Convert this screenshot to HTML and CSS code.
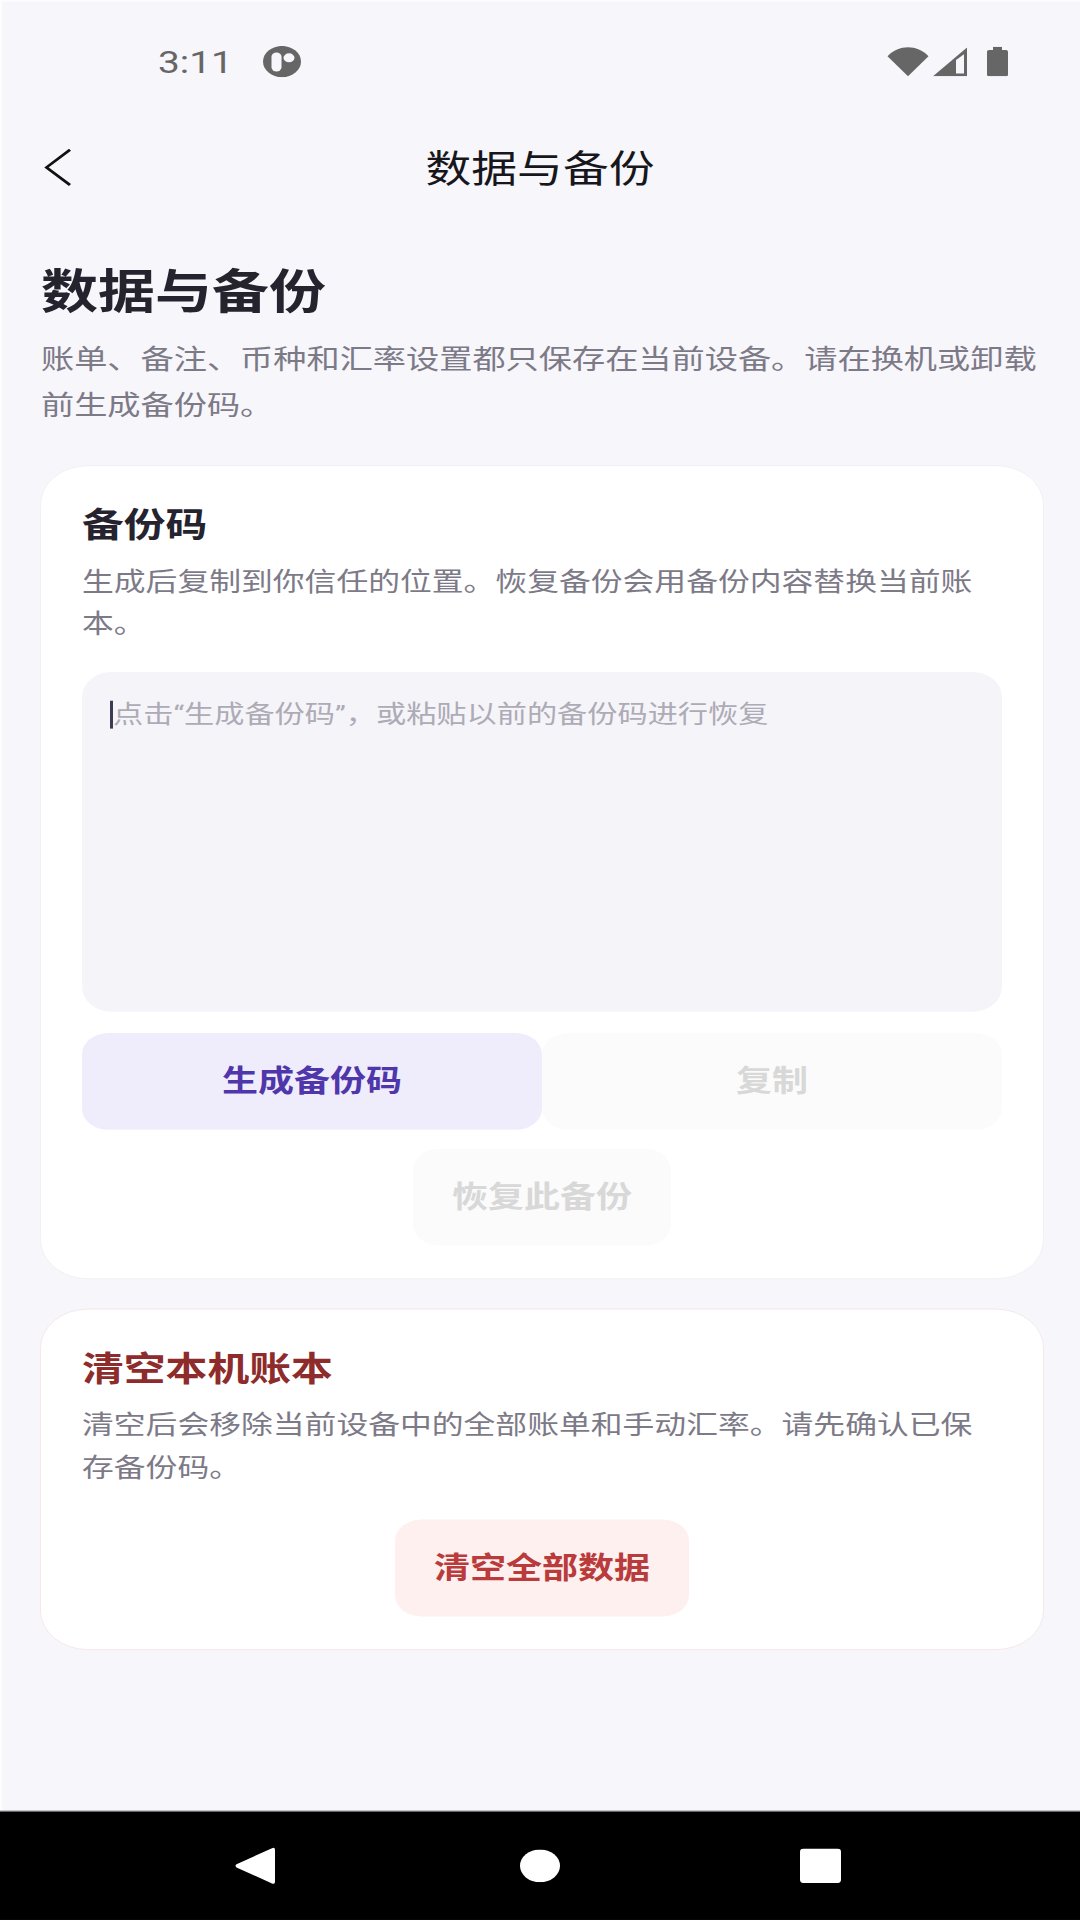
FILE: index.html
```html
<!DOCTYPE html>
<html lang="zh-CN">
<head>
<meta charset="utf-8">
<title>数据与备份</title>
<link rel="stylesheet" href="styles.css">
</head>
<body>
<div class="frame">
<div class="screen">
  <div class="status-bar">
    <span class="clock">3:11</span>
    <svg class="app-dot" viewBox="0 0 38 38"><circle cx="19" cy="19" r="19" fill="#666"/><rect x="8.500" y="8" width="10" height="23" rx="5" fill="#f7f6fb"/><circle cx="26" cy="14.500" r="5.500" fill="#f7f6fb"/></svg>
    <span class="status-icons">
      <svg class="ico-wifi" viewBox="0 0 42 36"><path d="M0.500 11.500C12 -3 30 -3 41.500 11.500L21 36Z" fill="#666"/></svg>
      <svg class="ico-signal" viewBox="0 0 34 35"><path d="M34 0V35H0Z" fill="#666"/><path d="M23 15L31 8V31.500H23Z" fill="#f7f6fb"/></svg>
      <svg class="ico-battery" viewBox="0 0 21 36"><path d="M6 0H15V4H19A2 2 0 0 1 21 6V34A2 2 0 0 1 19 36H2A2 2 0 0 1 0 34V6A2 2 0 0 1 2 4H6Z" fill="#666"/></svg>
    </span>
  </div>
  <header class="top-bar">
    <svg class="back" viewBox="0 0 28 46"><path d="M26 1.500L2.500 23L26 44.500" fill="none" stroke="#111" stroke-width="3"/></svg>
    <span class="top-title">数据与备份</span>
  </header>
  <main class="content">
    <h1 class="heading">数据与备份</h1>
    <p class="intro">账单、备注、币种和汇率设置都只保存在当前设备。请在换机或卸载前生成备份码。</p>
    <section class="card card-backup">
      <h2 class="card-title">备份码</h2>
      <p class="card-desc">生成后复制到你信任的位置。恢复备份会用备份内容替换当前账本。</p>
      <div class="code-box"><span class="caret"></span><span class="placeholder">点击“生成备份码”，或粘贴以前的备份码进行恢复</span></div>
      <div class="btn-row">
        <button class="btn btn-primary">生成备份码</button>
        <button class="btn btn-disabled">复制</button>
      </div>
      <div class="btn-center">
        <button class="btn btn-disabled btn-fit">恢复此备份</button>
      </div>
    </section>
    <section class="card card-danger">
      <h2 class="card-title title-danger">清空本机账本</h2>
      <p class="card-desc">清空后会移除当前设备中的全部账单和手动汇率。请先确认已保存备份码。</p>
      <div class="btn-center btn-center-danger">
        <button class="btn btn-danger btn-fit">清空全部数据</button>
      </div>
    </section>
  </main>
  <nav class="nav-bar">
    <svg class="nav-back" viewBox="0 0 40 46"><path d="M37 1.500Q40 0 40 3.500V42.500Q40 46 37 44.500L1.500 25Q-0.500 23 1.500 21Z" fill="#fff"/></svg>
    <svg class="nav-home" viewBox="0 0 40 40"><circle cx="20" cy="20" r="20" fill="#fff"/></svg>
    <svg class="nav-recent" viewBox="0 0 41 42"><rect width="41" height="42" rx="4" fill="#fff"/></svg>
  </nav>
</div>
</div>
</body>
</html>
```
FILE: styles.css
```css
html, body {
  margin: 0;
  height: 1920px;
  overflow: hidden;
  background: #f7f6fb;
}
* { box-sizing: border-box; }
.frame { height: 1920px; overflow: hidden; }
.screen {
  width: 1080px;
  height: 2340px;
  transform: scaleY(0.8205);
  transform-origin: 0 0;
  display: flex;
  flex-direction: column;
  background: #f7f6fb;
  box-shadow: inset 2px 2px 0 #fdfdfe;
  font-family: Roboto, "Noto Sans CJK SC", sans-serif;
}
.status-bar {
  height: 150px;
  flex: none;
  display: flex;
  align-items: center;
  padding: 0 72px 0 158px;
}
.clock { font-size: 38.800px; color: #666; }
.app-dot { width: 38px; height: 38px; margin-left: 30px; }
.status-icons { margin-left: auto; display: flex; align-items: center; }
.ico-wifi { width: 42px; height: 36px; }
.ico-signal { width: 34px; height: 35px; margin-left: 4px; }
.ico-battery { width: 21px; height: 36px; margin-left: 20px; }
.top-bar {
  height: 108px;
  flex: none;
  display: flex;
  align-items: center;
  justify-content: center;
  position: relative;
}
.back { position: absolute; left: 44px; top: 31px; width: 28px; height: 46px; }
.top-title { font-size: 45.800px; color: #17161c; line-height: 56px; padding-top: 5px; }
.content { padding: 63px 36px 0 40px; }
.heading {
  margin: 0;
  padding-left: 1px;
  font-size: 57px;
  line-height: 70px;
  font-weight: 700;
  color: #25232e;
}
.intro {
  margin: 20px 0 44px;
  font-size: 33.200px;
  line-height: 56px;
  padding-left: 1px;
  color: #7d7a88;
}
.card {
  background: #fff;
  border: 1px solid #efeef4;
  border-radius: 48px;
  padding: 45px 41px 40px;
}
.card-danger {
  margin-top: 36px;
  border-color: #f3e6e8;
  padding-top: 45px;
}
.card-title {
  margin: 0;
  font-size: 41.800px;
  line-height: 56px;
  font-weight: 700;
  color: #25232e;
}
.title-danger { color: #8e2c2c; }
.card-desc {
  margin: 14px 0 0;
  font-size: 31.800px;
  line-height: 52px;
  color: #7d7a88;
}
.code-box {
  margin-top: 32px;
  height: 414px;
  background: #f5f4f9;
  border-radius: 30px;
  padding: 35px 28px;
  display: flex;
  align-items: flex-start;
}
.caret { width: 3px; height: 34px; background: #3d3a52; flex: none; }
.placeholder { font-size: 30.200px; line-height: 34px; color: #adabb5; }
.btn-row {
  margin-top: 26px;
  display: grid;
  grid-template-columns: 1fr 1fr;
}
.btn-center { margin-top: 23px; display: flex; justify-content: center; }
.btn-center-danger { margin-top: 37px; }
.btn {
  height: 118px;
  border: 0;
  border-radius: 26px;
  padding: 0 39px 9px;
  font-family: inherit;
  font-size: 36px;
  font-weight: 700;
}
.btn-fit { width: auto; }
.btn-primary { background: #efedfb; color: #4f36ab; }
.btn-disabled { background: #fbfbfb; color: #d8d8d8; }
.btn-danger { background: #fdf0ef; color: #b93b3b; }
.nav-bar {
  margin-top: auto;
  height: 133px;
  flex: none;
  background: #000;
  border-top: 1px solid #9a9a9a;
  display: flex;
  align-items: center;
  justify-content: center;
  gap: 240px;
  padding-right: 4px;
}
.nav-back { width: 40px; height: 46px; margin-right: 5px; }
.nav-home { width: 40px; height: 40px; }
.nav-recent { width: 41px; height: 42px; }
```
